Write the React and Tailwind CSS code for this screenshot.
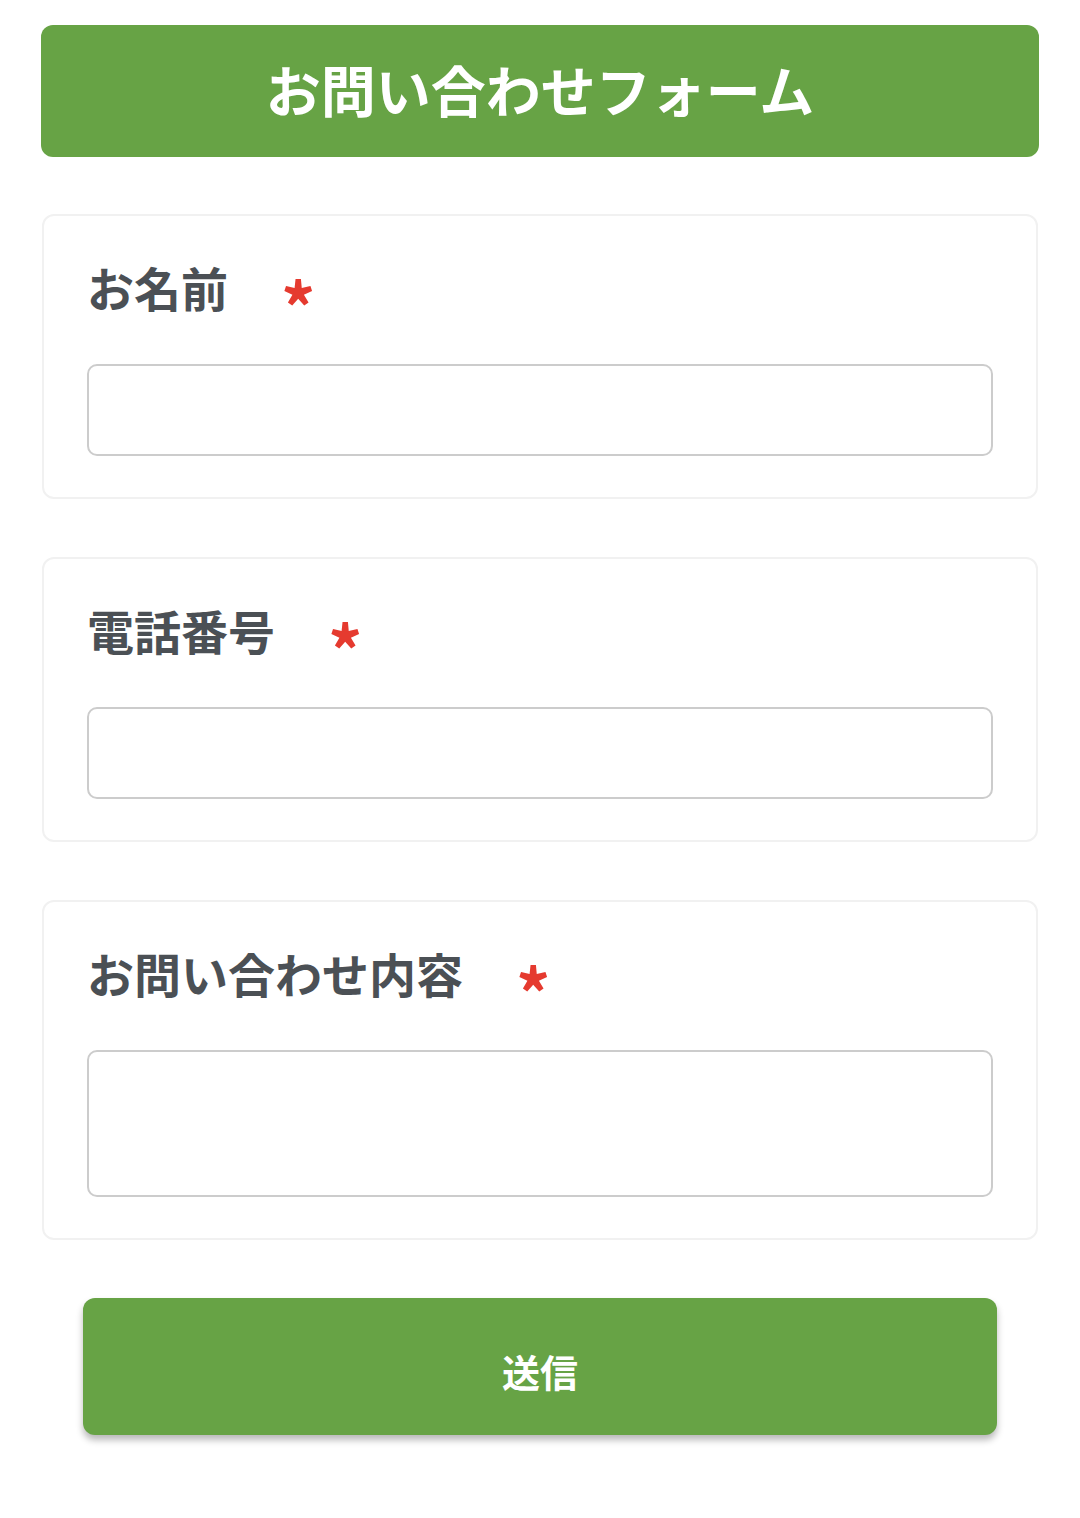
import React from "react";

const Field = ({ label, tall }) => (
  <div className="border-2 border-[#f1f1f1] rounded-xl bg-white pt-[48px] pb-[41px] px-[43px]">
    <div className="flex items-center text-[47px] leading-[46px] font-bold text-[#4b5055]">
      <span>{label}</span>
      <span className="ml-[53px] text-[#e53a2f] text-[68px] leading-[46px] translate-y-[18px]">*</span>
    </div>
    {tall ? (
      <textarea className="block w-full mt-[54px] h-[147px] border-2 border-[#cccccc] rounded-[10px] bg-white resize-none outline-none" />
    ) : (
      <input className="block w-full mt-[54px] h-[92px] border-2 border-[#cccccc] rounded-[10px] bg-white outline-none" />
    )}
  </div>
);

export default function App() {
  return (
    <div
      className="min-h-[1518px] bg-white px-[42px] pt-[25px]"
      style={{ fontFamily: '"Noto Sans CJK JP", "Noto Sans", sans-serif' }}
    >
      <div className="-mx-px h-[132px] rounded-xl bg-[#67a345] flex items-center justify-center">
        <h1 className="text-white font-bold text-[55px] leading-none -translate-y-[3px]">お問い合わせフォーム</h1>
      </div>

      <div className="mt-[57px] flex flex-col gap-[58px]">
        <Field label="お名前" />
        <Field label="電話番号" />
        <Field label="お問い合わせ内容" tall />
      </div>

      <div className="mt-[58px] px-[41px]">
        <button className="w-full h-[137px] rounded-xl bg-[#67a345] text-white font-bold text-[38px] pt-[8px] shadow-[0_5px_7px_rgba(0,0,0,0.28)]">
          送信
        </button>
      </div>
    </div>
  );
}
